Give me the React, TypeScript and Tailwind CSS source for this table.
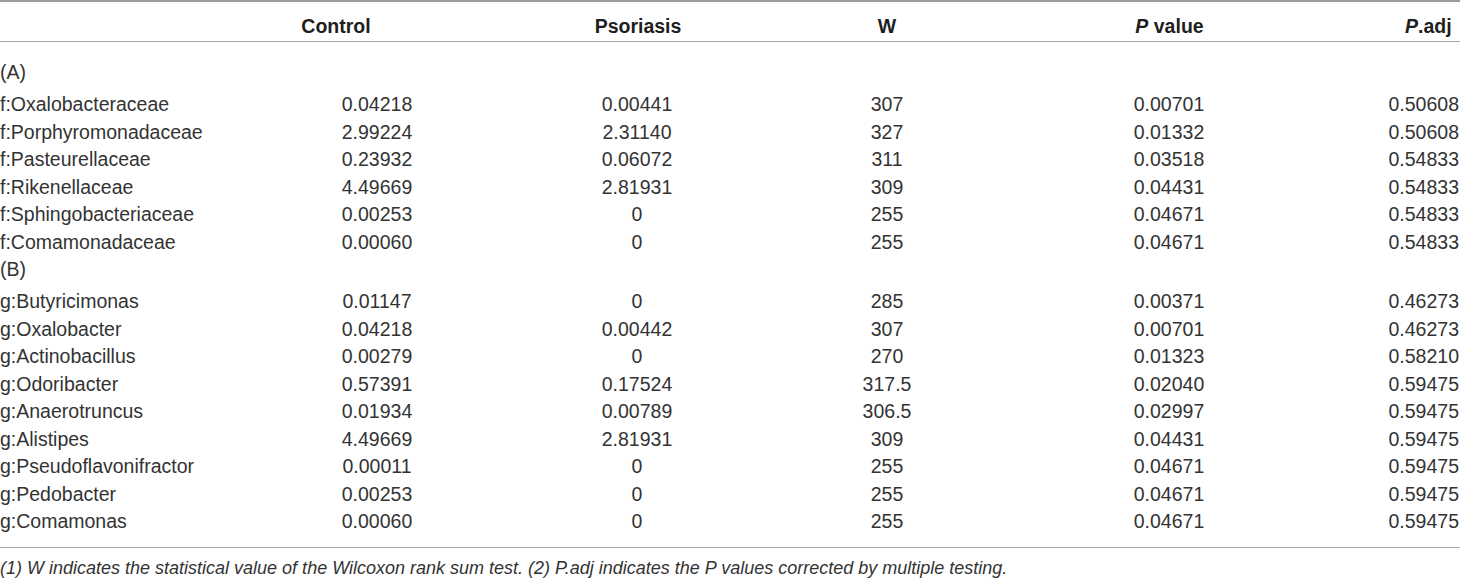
const sectionA = [
  ["f:Oxalobacteraceae", "0.04218", "0.00441", "307", "0.00701", "0.50608"],
  ["f:Porphyromonadaceae", "2.99224", "2.31140", "327", "0.01332", "0.50608"],
  ["f:Pasteurellaceae", "0.23932", "0.06072", "311", "0.03518", "0.54833"],
  ["f:Rikenellaceae", "4.49669", "2.81931", "309", "0.04431", "0.54833"],
  ["f:Sphingobacteriaceae", "0.00253", "0", "255", "0.04671", "0.54833"],
  ["f:Comamonadaceae", "0.00060", "0", "255", "0.04671", "0.54833"],
];

const sectionB = [
  ["g:Butyricimonas", "0.01147", "0", "285", "0.00371", "0.46273"],
  ["g:Oxalobacter", "0.04218", "0.00442", "307", "0.00701", "0.46273"],
  ["g:Actinobacillus", "0.00279", "0", "270", "0.01323", "0.58210"],
  ["g:Odoribacter", "0.57391", "0.17524", "317.5", "0.02040", "0.59475"],
  ["g:Anaerotruncus", "0.01934", "0.00789", "306.5", "0.02997", "0.59475"],
  ["g:Alistipes", "4.49669", "2.81931", "309", "0.04431", "0.59475"],
  ["g:Pseudoflavonifractor", "0.00011", "0", "255", "0.04671", "0.59475"],
  ["g:Pedobacter", "0.00253", "0", "255", "0.04671", "0.59475"],
  ["g:Comamonas", "0.00060", "0", "255", "0.04671", "0.59475"],
];

const Row = ({ cells }: { cells: string[] }) => (
  <div className="grid grid-cols-[277px_200px_320px_180px_384px_99px] h-[27.5px] leading-[27.5px]">
    <div className="text-left">{cells[0]}</div>
    <div className="text-center">{cells[1]}</div>
    <div className="text-center">{cells[2]}</div>
    <div className="text-center">{cells[3]}</div>
    <div className="text-center">{cells[4]}</div>
    <div className="text-right pr-[1px]">{cells[5]}</div>
  </div>
);

const Section = ({ label, rows }: { label: string; rows: string[][] }) => (
  <div className="flex flex-col">
    {/* section label */}
    <div className="h-[32px] leading-[27.5px]">{label}</div>
    {rows.map((r) => (
      <Row key={r[0]} cells={r} />
    ))}
  </div>
);

export default function App() {
  return (
    <div
      className="w-[1460px] h-[578px] overflow-hidden bg-white text-[#333] text-[19.5px]"
      style={{ fontFamily: '"Liberation Sans", Arial, sans-serif' }}
    >
      <div className="border-t-2 border-[#9c9c9c]">
        {/* Header */}
        <div className="grid grid-cols-[236px_200px_404px_94px_471px_55px] h-[40px] pt-[11px] leading-[27.5px] font-bold text-[#1e1e1e] border-b-[1.5px] border-[#a8a8a8]">
          <div></div>
          <div className="text-center">Control</div>
          <div className="text-center">Psoriasis</div>
          <div className="text-center">W</div>
          <div className="text-center">
            <i>P</i> value
          </div>
          <div className="text-right pr-[9px]">
            <i>P</i>.adj
          </div>
        </div>

        {/* Body */}
        <div className="pt-[17px] pb-[11px] border-b-[1.5px] border-[#a8a8a8]">
          <Section label="(A)" rows={sectionA} />
          <Section label="(B)" rows={sectionB} />
        </div>

        {/* Footnote */}
        <p className="pt-[10px] text-[18px] italic leading-[21px] text-[#333]">
          (1) W indicates the statistical value of the Wilcoxon rank sum test. (2) P.adj indicates the P values
          corrected by multiple testing.
        </p>
      </div>
    </div>
  );
}
